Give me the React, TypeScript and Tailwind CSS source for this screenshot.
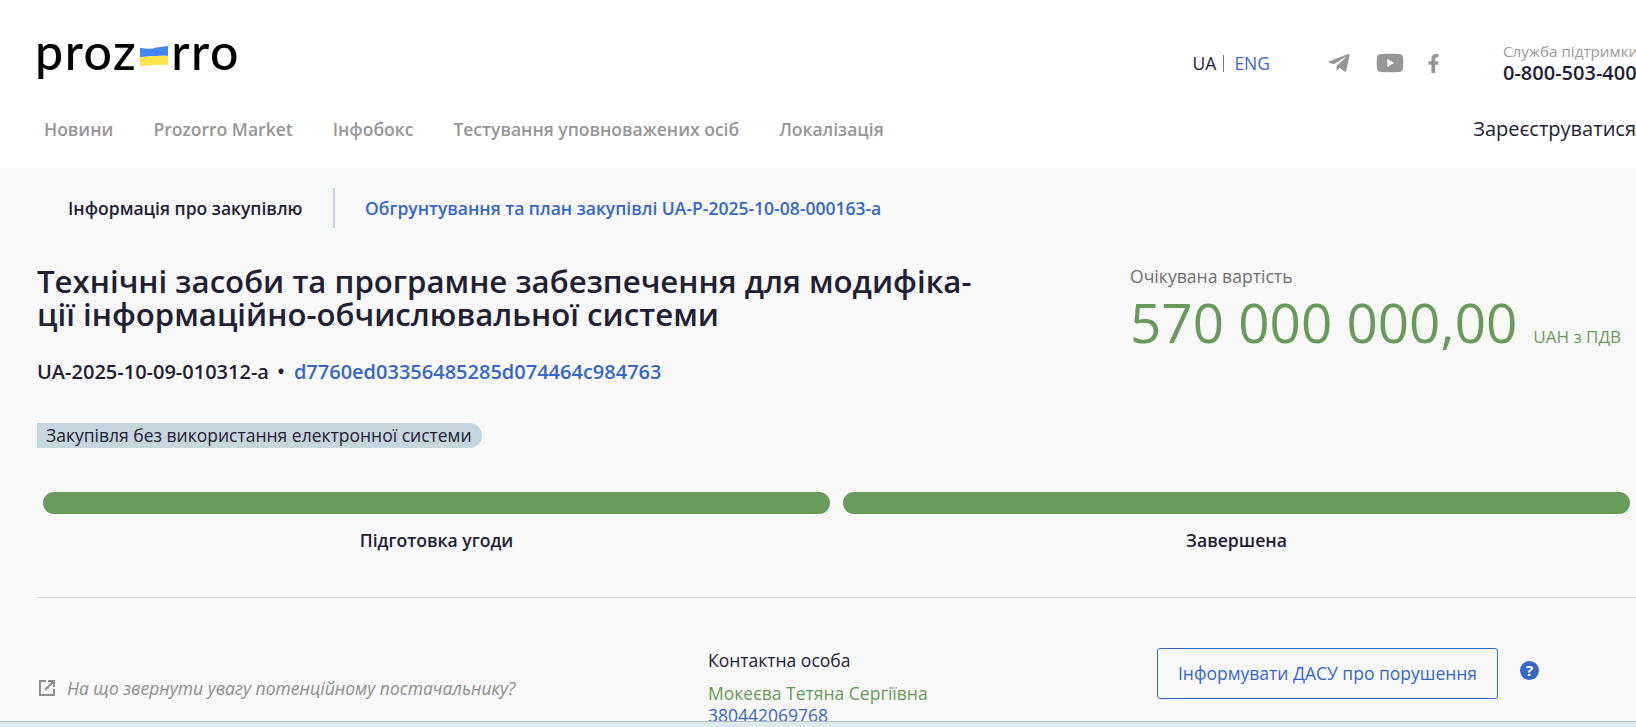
import { FaFacebookF, FaTelegramPlane, FaYoutube } from "react-icons/fa";

const navItems = ["Новини", "Prozorro Market", "Інфобокс", "Тестування уповноважених осіб", "Локалізація"];

function Flag() {
  return (
    <svg width="28" height="20" viewBox="0 0 28 22" preserveAspectRatio="none" className="mx-[3px] mt-[9px]">
      <path d="M0 2 C7 3 10 4 15 2 L28 0 L28 11 C20 10 8 12 0 12 Z" fill="#4285f4" />
      <path d="M0 12 C8 12 20 10 28 11 L28 21 C20 20 8 22 0 22 Z" fill="#ffe44d" />
    </svg>
  );
}

function Logo() {
  return (
    <div className="flex items-center -ml-[2px] font-['Lato',sans-serif] text-[50px] leading-none font-medium text-black tracking-[1.5px]">
      <span>proz</span>
      <Flag />
      <span>rro</span>
    </div>
  );
}

export default function App() {
  return (
    <div className="h-[727px] w-[1636px] overflow-hidden relative bg-[#f8f8f8] font-['Open_Sans',sans-serif] text-[#1f2033]">
      <header className="h-[168px] bg-white pl-[37px] flex flex-col">
        <div className="h-[112px] flex items-start justify-between">
          <div className="pt-[26px]">
            <Logo />
          </div>
          <div className="flex items-start pt-[42px]">
            <div className="flex items-center text-[17.5px] leading-[22px] pt-[10px]">
              <span>UA</span>
              <span className="w-px h-[17px] bg-[#777] ml-[7px] mr-[10px]" />
              <span className="text-[#3767c6]">ENG</span>
            </div>
            <div className="flex items-center text-[#969696] ml-[57px] pt-[7px]">
              <FaTelegramPlane size={24} />
              <FaYoutube size={28} className="ml-[25px]" />
              <FaFacebookF size={19} className="ml-[20px]" />
            </div>
            <div className="ml-[60px] w-[133px] shrink-0 overflow-hidden whitespace-nowrap">
              <div className="text-[15.2px] leading-[19px] text-[#9a9a9a]">Служба підтримки</div>
              <div className="text-[20px] leading-[24px] font-semibold">0-800-503-400</div>
            </div>
          </div>
        </div>
        <nav className="flex items-center justify-between h-[34px]">
          <div className="flex gap-[40px] pl-[7px] text-[17.5px] font-semibold text-[#969696]">
            {navItems.map((item) => (
              <span key={item}>{item}</span>
            ))}
          </div>
          <span className="text-[20px] whitespace-nowrap">Зареєструватися</span>
        </nav>
      </header>

      <main className="px-[37px]">
        <div className="flex items-center h-[40px] mt-[20px] text-[17.5px] font-semibold">
          <span className="pl-[31px] w-[296px]">Інформація про закупівлю</span>
          <span className="w-[2px] h-[40px] bg-[#c5d6de]" />
          <span className="pl-[30px] text-[#3767c6]">Обгрунтування та план закупівлі UA-P-2025-10-08-000163-a</span>
        </div>

        <div className="flex mt-[37px]">
          <div className="w-[1093px] shrink-0">
            <h1 className="text-[31.2px] leading-[33px] font-semibold">
              Технічні засоби та програмне забезпечення для модифіка-
              <br />
              ції інформаційно-обчислювальної системи
            </h1>
            <div className="mt-[28px] text-[20px] leading-[26px] font-semibold">
              UA-2025-10-09-010312-a <span className="ml-[3px] mr-[4px]">•</span>{" "}
              <span className="text-[#3767c6]">d7760ed03356485285d074464c984763</span>
            </div>
            <div className="mt-[38px]">
              <span className="block w-fit bg-[#c5d6de] rounded-r-full h-[25px] pl-[9px] pr-[10px] text-[17.5px] leading-[25px]">
                Закупівля без використання електронної системи
              </span>
            </div>
          </div>
          <div className="-mt-[1px]">
            <div className="text-[17.6px] leading-[24px] text-[#6f6f6f]">Очікувана вартість</div>
            <div className="flex items-end text-[#689a59] whitespace-nowrap -mt-[1px]">
              <span className="text-[54.8px] leading-[70px]">570 000 000,00</span>
              <span className="ml-[16px] mb-[8px] text-[17px] leading-[24px]">UAH з ПДВ</span>
            </div>
          </div>
        </div>

        <div className="grid grid-cols-2 gap-[13px] mt-[44px] pl-[6px] w-[1593px]">
          {["Підготовка угоди", "Завершена"].map((label) => (
            <div key={label} className="flex flex-col items-center">
              <div className="w-full h-[22px] rounded-full bg-[#689a59]" />
              <div className="mt-[14px] text-[17.6px] leading-[24px] font-semibold">{label}</div>
            </div>
          ))}
        </div>

        <div className="h-px bg-[#dcdcdc] mt-[45px] w-[1599px]" />

        <div className="flex mt-[50px]">
          <div className="w-[671px] shrink-0 flex items-center gap-[11px] h-[20px] mt-[30px] pl-[1px] text-[#8e8e8e]">
            <svg width="18" height="18" viewBox="0 0 18 18" fill="none" stroke="currentColor" strokeWidth="2">
              <path d="M8 2H2v14h14v-6" />
              <path d="M7 11L15 3M10 2h6v6" />
            </svg>
            <span className="italic text-[17.5px]">На що звернути увагу потенційному постачальнику?</span>
          </div>
          <div className="w-[449px] shrink-0 text-[17.5px] leading-[24px]">
            <div>Контактна особа</div>
            <div className="mt-[9px] text-[#689a59]">Мокеєва Тетяна Сергіївна</div>
            <div className="-mt-[2px] text-[#3767c6]">380442069768</div>
          </div>
          <div className="h-[51px] w-[341px] border border-[#3767c6] rounded-[3px] flex items-center justify-center text-[17.5px] text-[#3767c6]">
            Інформувати ДАСУ про порушення
          </div>
          <div className="ml-[22px] mt-[13px] w-[19px] h-[19px] rounded-full bg-[#3767c6] text-white text-[15px] font-bold leading-[19px] text-center">
            ?
          </div>
        </div>
      </main>

      <div className="absolute left-0 right-0 bottom-0 h-[6px] border-t border-[#b5bcc0] bg-[#dcebf0]" />
    </div>
  );
}
